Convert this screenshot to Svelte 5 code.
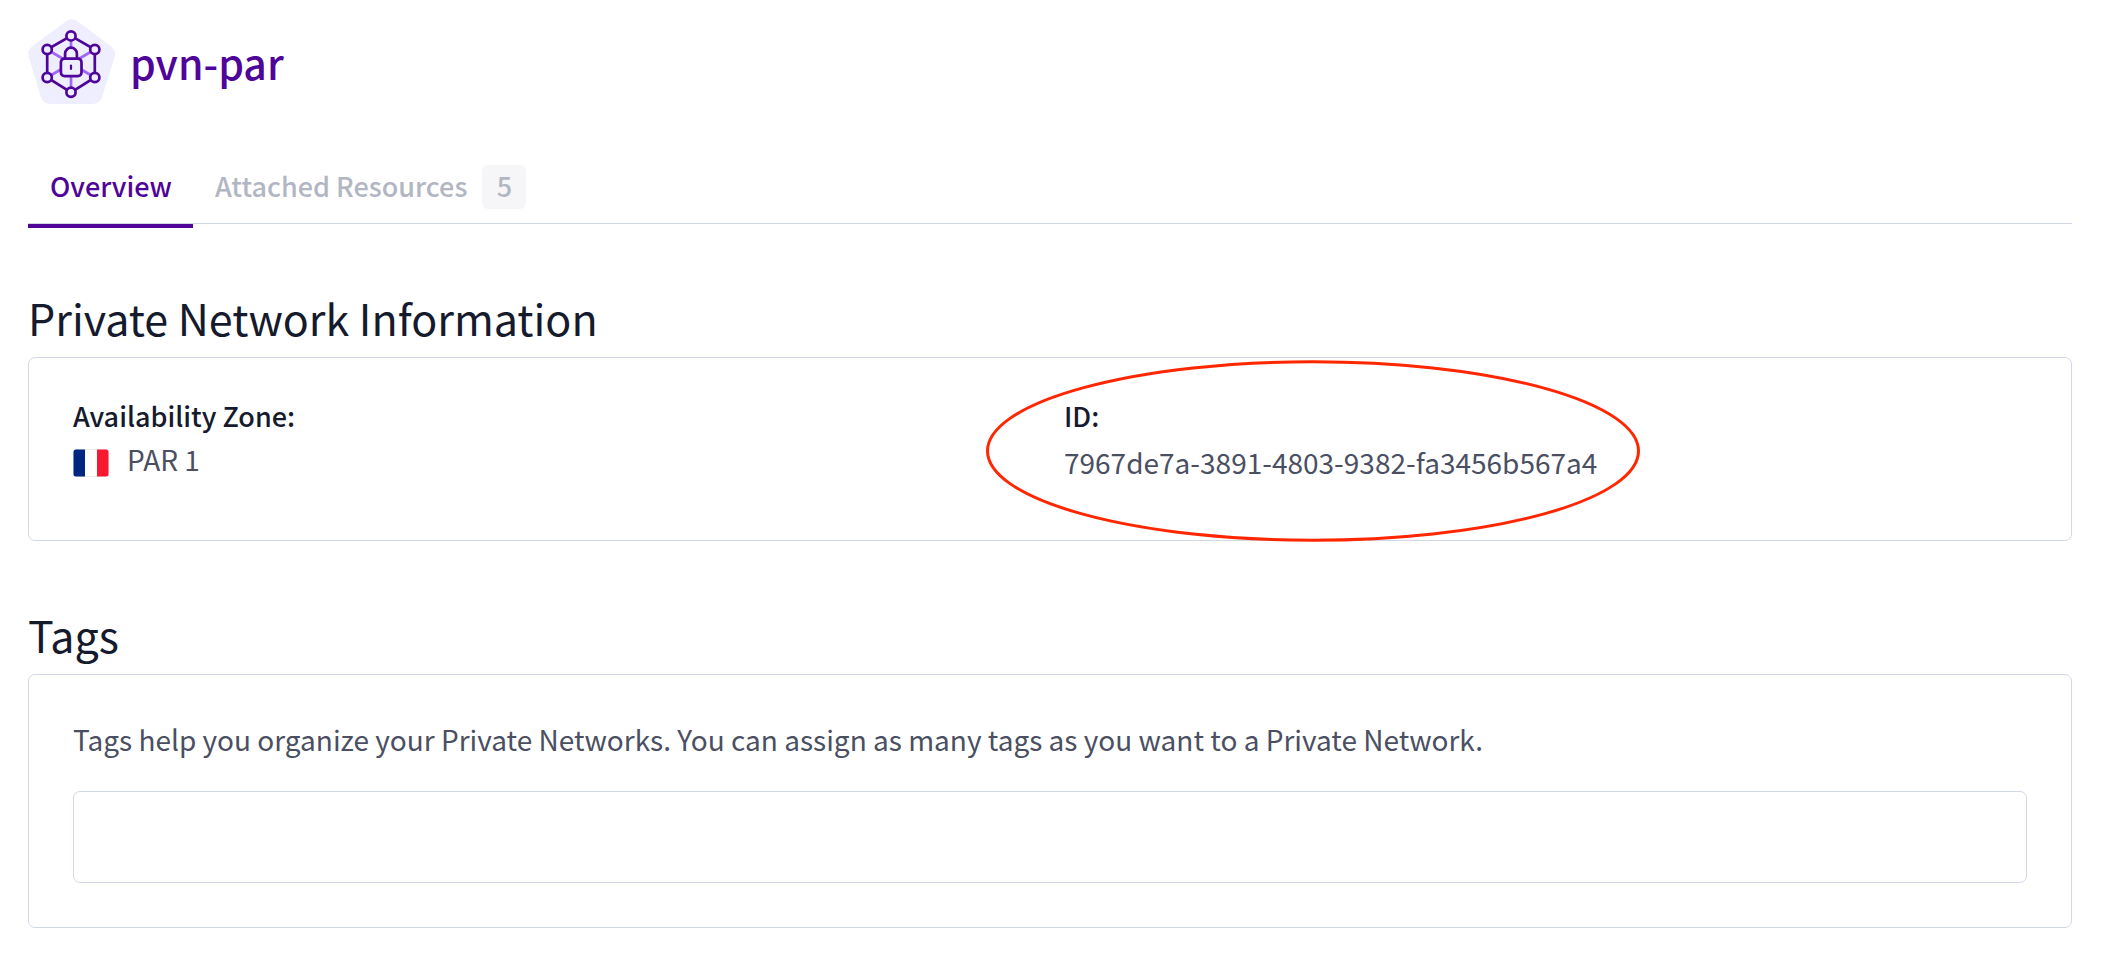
<script>
  const network = {
    name: 'pvn-par',
    zone: 'PAR 1',
    id: '7967de7a-3891-4803-9382-fa3456b567a4',
  };
  const tabs = [
    { key: 'overview', label: 'Overview' },
    { key: 'resources', label: 'Attached Resources', count: 5 },
  ];
  const nodes = [
    [43, 16.9],
    [66.8, 30.5],
    [66.8, 58.5],
    [43, 73.3],
    [19.2, 58.5],
    [19.2, 30.5],
  ];
  const ring = nodes.map((n) => n.join(',')).join(' ');

  let active = $state('overview');
  let tag = $state('');
</script>

<main>
  <header>
    <svg class="logo" viewBox="0 0 88 86" aria-hidden="true">
      <path
        d="M43.7 10.5 77 35.3 64.5 75h-42L10.3 35.3Z"
        fill="#eeeeff"
        stroke="#eeeeff"
        stroke-width="20"
        stroke-linejoin="round"
      />
      <g stroke="#a365ff" stroke-width="2.7">
        {#each nodes as [x, y]}
          <line x1="43" y1="44.5" x2={x} y2={y} />
        {/each}
      </g>
      <polygon points={ring} fill="none" stroke="#4f0599" stroke-width="2.7" />
      <g fill="#eeeeff" stroke="#4f0599" stroke-width="2.7">
        {#each nodes as [x, y]}
          <circle cx={x} cy={y} r="4.6" />
        {/each}
        <path d="M37.1 39.5V34.6a5.9 5.9 0 0 1 11.8 0v4.9" />
        <rect x="32.9" y="39.7" width="20.6" height="17.4" rx="3.6" />
        <path d="M43 46.6v3.4" stroke-width="2.2" stroke-linecap="round" />
      </g>
    </svg>
    <h1>{network.name}</h1>
  </header>

  <div class="tabs" role="tablist">
    {#each tabs as tab}
      <button
        type="button"
        role="tab"
        class="tab"
        class:active={active === tab.key}
        aria-selected={active === tab.key}
        onclick={() => (active = tab.key)}
      >
        <span class="tab-label">{tab.label}</span>
        {#if tab.count}<span class="count">{tab.count}</span>{/if}
      </button>
    {/each}
  </div>

  <section>
    <h2>Private Network Information</h2>
    <dl class="card info">
      <div class="field">
        <dt>Availability Zone:</dt>
        <dd class="zone">
          <svg class="flag" viewBox="0 0 36 28" aria-hidden="true">
            <rect x=".5" y=".5" width="35" height="27" rx="2.5" fill="#fff" stroke="#ececec" />
            <path d="M12 .5v27H3A2.5 2.5 0 0 1 .5 25V3A2.5 2.5 0 0 1 3 .5Z" fill="#00267f" />
            <path d="M24 .5v27h9a2.5 2.5 0 0 0 2.5-2.5V3A2.5 2.5 0 0 0 33 .5Z" fill="#f8182f" />
          </svg>
          {network.zone}
        </dd>
      </div>
      <div class="field">
        <dt>ID:</dt>
        <dd class="id">{network.id}</dd>
        <svg class="highlight" viewBox="0 0 654 182" aria-hidden="true">
          <ellipse cx="327" cy="91" rx="325.5" ry="89.3" fill="none" stroke="#ff2600" stroke-width="3" />
        </svg>
      </div>
    </dl>
  </section>

  <section>
    <h2>Tags</h2>
    <div class="card tags">
      <label for="tag-input">
        Tags help you organize your Private Networks. You can assign as many tags as you want to a
        Private Network.
      </label>
      <input id="tag-input" type="text" bind:value={tag} />
    </div>
  </section>
</main>

<style>
  :global(body) {
    background: #fff;
  }

  main {
    padding: 19px 33px 26px 28px;
    font-family: 'Noto Sans CJK SC', 'Noto Sans', sans-serif;
    font-size: 28px;
    line-height: 36px;
    color: #4a4f62;
  }

  header {
    display: flex;
    align-items: center;
    gap: 14px;
  }

  .logo {
    width: 88px;
    height: 86px;
  }

  h1 {
    margin: 0;
    font-size: 41px;
    line-height: 52px;
    font-weight: 500;
    color: #4f0599;
  }

  .tabs {
    display: flex;
    margin-top: 60px;
    border-bottom: 1px solid #d2d8e6;
  }

  .tab {
    position: relative;
    display: flex;
    align-items: center;
    gap: 15px;
    padding: 0 21px 14px 22px;
    border: 0;
    background: none;
    font: inherit;
    font-size: 27px;
    font-weight: 500;
    line-height: 42px;
    color: #b2b6c3;
    cursor: pointer;
  }

  .tab-label,
  .count {
    padding-bottom: 2px;
  }

  .count {
    min-width: 44px;
    border-radius: 6px;
    background: #f6f6f8;
    text-align: center;
  }

  .tab.active {
    color: #4f0599;
  }

  .tab.active::after {
    content: '';
    position: absolute;
    left: 0;
    right: 0;
    bottom: -5px;
    height: 4px;
    background: #4f0599;
  }

  section {
    margin-top: 67px;
  }

  h2 {
    margin: 0 0 14px;
    font-size: 43px;
    line-height: 52px;
    font-weight: 400;
    color: #151a2d;
  }

  .card {
    margin: 0;
    border: 1px solid #d2d8e6;
    border-radius: 7px;
  }

  .info {
    display: grid;
    grid-template-columns: 1fr 1fr;
    gap: 28px;
    padding: 40px 44px 60px;
  }

  .field {
    position: relative;
  }

  dt {
    font-size: 27px;
    font-weight: 500;
    color: #151a2d;
  }

  dd {
    margin: 0;
  }

  .zone {
    display: flex;
    align-items: flex-end;
    gap: 18px;
    padding-top: 7px;
  }

  .flag {
    width: 36px;
    height: 28px;
  }

  .id {
    padding-top: 10px;
  }

  .highlight {
    position: absolute;
    top: -38px;
    left: -78px;
    width: 654px;
    height: 182px;
    pointer-events: none;
  }

  .tags {
    display: flex;
    flex-direction: column;
    gap: 34px;
    padding: 46px 44px 44px;
  }

  input {
    box-sizing: border-box;
    width: 100%;
    height: 92px;
    padding: 0 22px;
    border: 1px solid #d2d8e6;
    border-radius: 7px;
    background: #fff;
    font: inherit;
    color: inherit;
  }
</style>
